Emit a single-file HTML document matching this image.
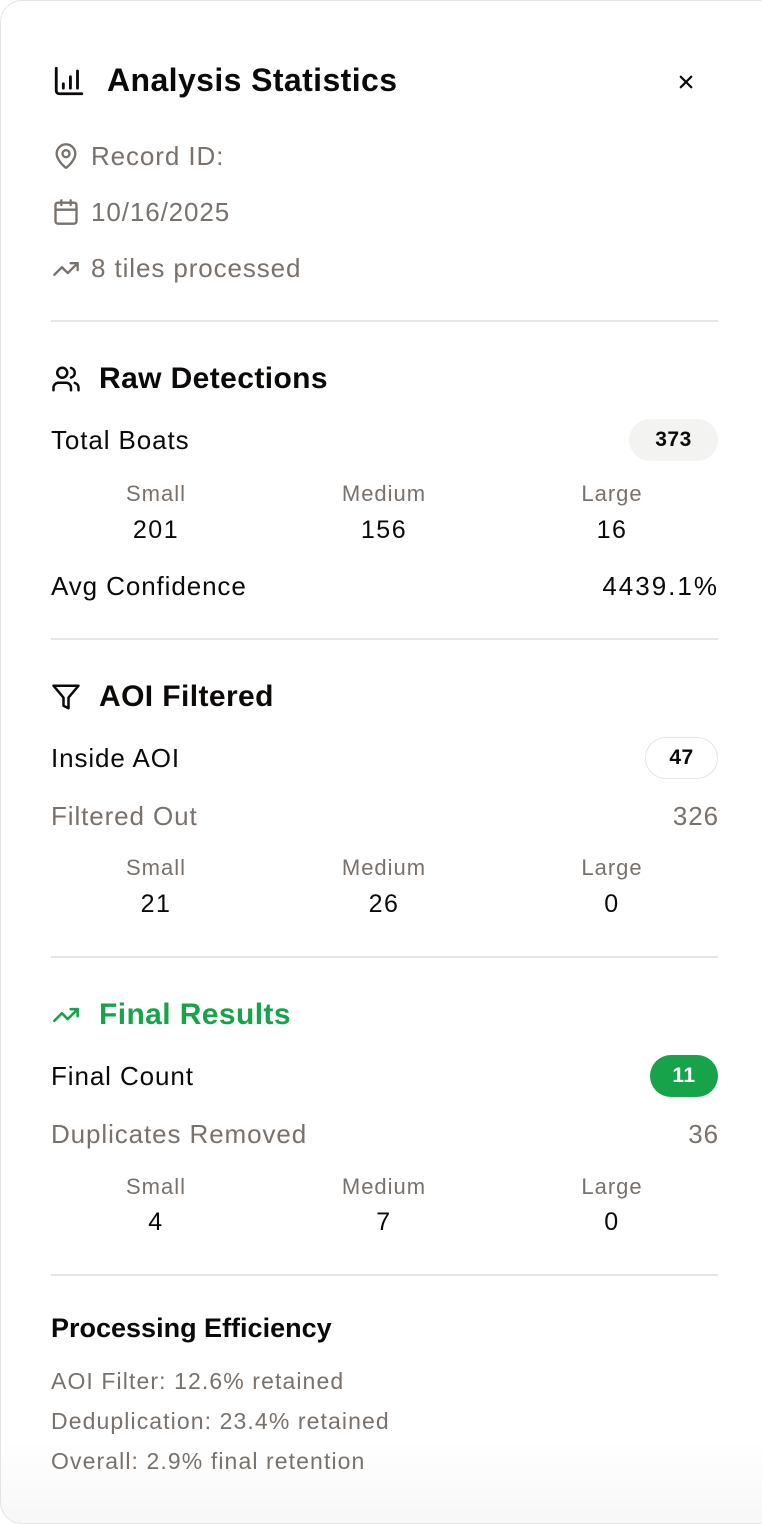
<!DOCTYPE html>
<html><head><meta charset="utf-8"><style>
*{margin:0;padding:0;box-sizing:border-box}
html,body{width:762px;height:1524px;background:#fff;overflow:hidden;font-family:"Liberation Sans",sans-serif;color:#0c0a09}
.card{position:absolute;left:0;top:0;width:780px;height:1524px;border:1.5px solid #e4e4e4;border-radius:22px;background:linear-gradient(#fff 1440px,#f7f7f7 1524px)}
.a{position:absolute;white-space:nowrap}
.g{color:#78716c}
.hr{position:absolute;left:51px;width:667px;height:2px;background:#e5e5e5}
.t{font-size:26px;line-height:30px;letter-spacing:0.9px}
.h{font-size:30px;font-weight:bold;line-height:34px;letter-spacing:0.4px}
.c{position:absolute;width:200px;text-align:center}
.lab{font-size:22px;line-height:26px;color:#78716c;letter-spacing:1px}
.num{font-size:25px;line-height:30px;letter-spacing:1.5px}
.badge{position:absolute;height:42px;border-radius:21px;font-size:21px;font-weight:bold;line-height:42px;text-align:center;letter-spacing:0.5px}
.eff{font-size:23px;line-height:26px;color:#78716c;letter-spacing:1.1px}
svg{position:absolute;fill:none;stroke-linecap:round;stroke-linejoin:round}
</style></head><body>
<div class="card"></div>

<svg style="left:52px;top:64px" width="34" height="34" viewBox="0 0 24 24" stroke="#0c0a09" stroke-width="2"><path d="M3 3v16a2 2 0 0 0 2 2h16"/><path d="M8 17v-3M13 17V9M18 17V5"/></svg>
<div class="a" style="left:107px;top:61px;font-size:32px;font-weight:bold;line-height:38px;letter-spacing:0.4px">Analysis Statistics</div>
<svg style="left:677px;top:73px" width="18" height="18" viewBox="0 0 24 24" stroke="#0c0a09" stroke-width="3"><path d="M5 5l14 14M19 5L5 19"/></svg>

<svg style="left:52px;top:142px" width="28" height="28" viewBox="0 0 24 24" stroke="#78716c" stroke-width="2"><path d="M20 10c0 5-5.5 10.2-7.4 11.8a1 1 0 0 1-1.2 0C9.5 20.2 4 15 4 10a8 8 0 0 1 16 0"/><circle cx="12" cy="10" r="3"/></svg>
<div class="a t g" style="left:91px;top:141px">Record ID:</div>
<svg style="left:52px;top:198px" width="28" height="28" viewBox="0 0 24 24" stroke="#78716c" stroke-width="2"><rect x="3" y="4" width="18" height="18" rx="2"/><path d="M16 2v4M8 2v4M3 10h18"/></svg>
<div class="a t g" style="left:91px;top:197px">10/16/2025</div>
<svg style="left:51px;top:255px" width="30" height="28" viewBox="0 0 24 24" stroke="#78716c" stroke-width="2"><path d="M22 7l-8.5 8.5-5-5L2 17"/><path d="M16 7h6v6"/></svg>
<div class="a t g" style="left:91px;top:253px">8 tiles processed</div>

<div class="hr" style="top:320px"></div>

<svg style="left:51px;top:364px" width="30" height="30" viewBox="0 0 24 24" stroke="#0c0a09" stroke-width="2"><path d="M16 21v-2a4 4 0 0 0-4-4H6a4 4 0 0 0-4 4v2"/><circle cx="9" cy="7" r="4"/><path d="M22 21v-2a4 4 0 0 0-3-3.87M16 3.13a4 4 0 0 1 0 7.75"/></svg>
<div class="a h" style="left:99px;top:362px">Raw Detections</div>
<div class="a t" style="left:51px;top:425px">Total Boats</div>
<div class="badge" style="left:629px;top:419px;width:89px;background:#f3f3f2">373</div>
<div class="c lab" style="left:56px;top:481px">Small</div><div class="c num" style="left:56px;top:515px">201</div>
<div class="c lab" style="left:284px;top:481px">Medium</div><div class="c num" style="left:284px;top:515px">156</div>
<div class="c lab" style="left:512px;top:481px">Large</div><div class="c num" style="left:512px;top:515px">16</div>
<div class="a t" style="left:51px;top:571px">Avg Confidence</div>
<div class="a" style="right:43px;top:571px;font-size:26px;line-height:30px;letter-spacing:2px">4439.1%</div>

<div class="hr" style="top:638px"></div>

<svg style="left:51px;top:682px" width="30" height="30" viewBox="0 0 24 24" stroke="#0c0a09" stroke-width="2"><path d="M22 3H2l8 9.46V19l4 2v-8.54L22 3z"/></svg>
<div class="a h" style="left:99px;top:680px">AOI Filtered</div>
<div class="a t" style="left:51px;top:743px">Inside AOI</div>
<div class="badge" style="left:645px;top:737px;width:73px;border:1.5px solid #e5e5e5;line-height:39px">47</div>
<div class="a t g" style="left:51px;top:801px">Filtered Out</div>
<div class="a t g" style="right:43px;top:801px">326</div>
<div class="c lab" style="left:56px;top:855px">Small</div><div class="c num" style="left:56px;top:889px">21</div>
<div class="c lab" style="left:284px;top:855px">Medium</div><div class="c num" style="left:284px;top:889px">26</div>
<div class="c lab" style="left:512px;top:855px">Large</div><div class="c num" style="left:512px;top:889px">0</div>

<div class="hr" style="top:956px"></div>

<svg style="left:51px;top:1001px" width="30" height="28" viewBox="0 0 24 24" stroke="#16a34a" stroke-width="2.2"><path d="M22 7l-8.5 8.5-5-5L2 17"/><path d="M16 7h6v6"/></svg>
<div class="a h" style="left:99px;top:998px;color:#16a34a">Final Results</div>
<div class="a t" style="left:51px;top:1061px">Final Count</div>
<div class="badge" style="left:650px;top:1055px;width:68px;background:#16a34a;color:#fff">11</div>
<div class="a t g" style="left:51px;top:1119px">Duplicates Removed</div>
<div class="a t g" style="right:43px;top:1119px">36</div>
<div class="c lab" style="left:56px;top:1174px">Small</div><div class="c num" style="left:56px;top:1207px">4</div>
<div class="c lab" style="left:284px;top:1174px">Medium</div><div class="c num" style="left:284px;top:1207px">7</div>
<div class="c lab" style="left:512px;top:1174px">Large</div><div class="c num" style="left:512px;top:1207px">0</div>

<div class="hr" style="top:1274px"></div>

<div class="a" style="left:51px;top:1313px;font-size:27px;font-weight:bold;line-height:30px">Processing Efficiency</div>
<div class="a eff" style="left:51px;top:1368px">AOI Filter: 12.6% retained</div>
<div class="a eff" style="left:51px;top:1408px">Deduplication: 23.4% retained</div>
<div class="a eff" style="left:51px;top:1448px">Overall: 2.9% final retention</div>
</body></html>
